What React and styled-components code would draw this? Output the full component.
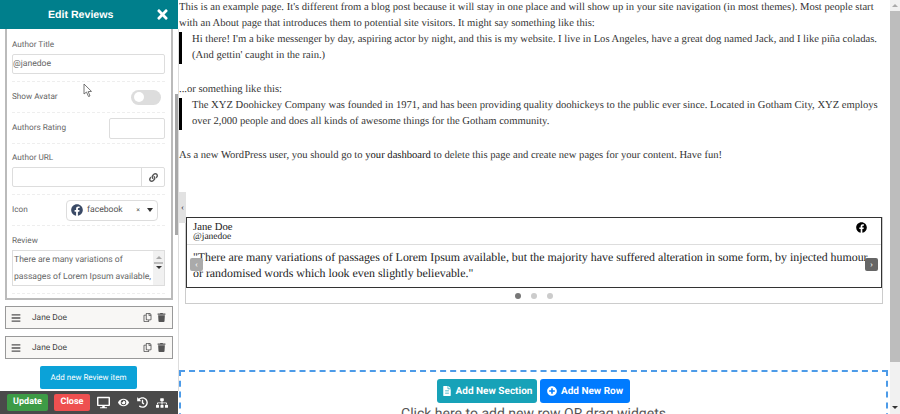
import React from 'react';
import styled, { createGlobalStyle } from 'styled-components';
import { FaFacebook, FaTrash, FaRegCopy, FaFileAlt, FaPlusCircle, FaBars, FaDesktop, FaEye, FaHistory, FaSitemap, FaLink, FaTimes } from 'react-icons/fa';

const GlobalStyle = createGlobalStyle`
  html, body { margin: 0; padding: 0; height: 414px; overflow: hidden; background: #fff; text-rendering: geometricPrecision; }
  * { box-sizing: border-box; }
`;

const Page = styled.div`
  display: flex;
  width: 900px;
  height: 414px;
  overflow: hidden;
`;

const Sidebar = styled.aside`
  flex: 0 0 179px;
  min-width: 0;
  display: flex;
  flex-direction: column;
  height: 414px;
  font-family: Roboto, "Liberation Sans", sans-serif;
  color: #555;
  background: #fff;
`;

const Header = styled.div`
  flex: 0 0 29px;
  margin-right: 1px;
  background: #007f8c;
  color: #fff;
  display: flex;
  align-items: center;
  white-space: nowrap;
  font: bold 10.6px "Liberation Sans", sans-serif;
  padding-left: 48px;
`;

const CloseX = styled.span`
  display: flex;
  margin-left: auto;
  margin-right: 8px;
  font-size: 15px;
`;

const SideBody = styled.div`
  flex: 1;
  min-height: 0;
  position: relative;
  padding-left: 5px;
  border-right: 1px solid #ddd;
`;

const SideThumb = styled.div`
  position: absolute;
  top: 65px;
  right: 0;
  width: 3px;
  height: 141px;
  background: #a8a8a8;
`;

const OpenItem = styled.div`
  width: 168px;
  height: 271px;
  border: 2px solid #bbb;
  border-top: 0;
  padding: 10px 6px 0 5px;
`;

const Field = styled.div`
  display: ${p => (p.$inline ? 'flex' : 'block')};
  align-items: center;
  justify-content: space-between;
  height: ${p => p.$h}px;
  padding-top: ${p => p.$pt || 0}px;
  border-bottom: 1px dashed #eee;
`;

const Label = styled.label`
  display: block;
  font-size: 8.2px;
  line-height: 12px;
  margin-bottom: ${p => (p.$inline ? 0 : 3)}px;
  color: #666;
`;

const Input = styled.div`
  height: ${p => p.$h || 20}px;
  width: ${p => p.$w || 153}px;
  border: 1px solid #ddd;
  border-radius: 2px;
  font-size: 8.6px;
  line-height: 18px;
  color: #666;
`;

const Toggle = styled.div`
  width: 30px;
  height: 15px;
  border-radius: 8px;
  background: #ddd;
  margin-right: 4px;
  padding: 2px 3px;
  &::before {
    content: '';
    display: block;
    width: 10px;
    height: 10px;
    margin-top: 0.5px;
    border-radius: 50%;
    background: #fff;
  }
`;

const UrlRow = styled.div`
  display: flex;
  justify-content: flex-end;
  width: 153px;
  height: 20px;
  border: 1px solid #ddd;
  border-radius: 2px;
`;

const UrlAddon = styled.div`
  width: 23px;
  border-left: 1px solid #ddd;
  display: flex;
  align-items: center;
  justify-content: center;
  color: #555;
  font-size: 9px;
`;

const Select = styled.div`
  width: 92px;
  height: 21px;
  margin-right: 7px;
  border: 1px solid #ddd;
  border-radius: 4px;
  display: flex;
  align-items: center;
  padding: 0 4px 0 4px;
  font-size: 8.6px;
  color: #555;
`;

const SelectName = styled.span`
  margin-left: 4px;
  flex: 1;
`;

const Caret = styled.span`
  margin-left: 7px;
  width: 0;
  height: 0;
  border-left: 3px solid transparent;
  border-right: 3px solid transparent;
  border-top: 4px solid #333;
`;

const Clear = styled.span`
  font-size: 7px;
  color: #333;
`;

const Textarea = styled.div`
  position: relative;
  width: 153px;
  height: 36px;
  border: 1px solid #ddd;
  font-size: 8.6px;
  line-height: 16.5px;
  padding: 1px 0 0 1px;
  color: #666;
  overflow: hidden;
  white-space: pre;
`;

const TextScroll = styled.div`
  position: absolute;
  top: 0;
  right: 0;
  bottom: 0;
  width: 11px;
  background: #f1f1f1;
  display: flex;
  flex-direction: column;
  align-items: center;
  padding-top: 5px;
`;

const TinyUp = styled.span`
  width: 0;
  height: 0;
  border-left: 3px solid transparent;
  border-right: 3px solid transparent;
  border-bottom: 3px solid #aaa;
`;

const TinyBar = styled.span`
  width: 9px;
  height: 2px;
  margin: 3px 0 2px;
  background: #bbb;
`;

const TinyDown = styled.span`
  width: 0;
  height: 0;
  border-left: 3px solid transparent;
  border-right: 3px solid transparent;
  border-top: 3px solid #333;
`;

const Collapsed = styled.div`
  margin-top: ${p => p.$mt}px;
  height: 23px;
  width: 168px;
  border: 1px solid #999;
  background: #f8f7f5;
  display: flex;
  align-items: center;
  padding: 0 6px 0 5px;
  font-size: 8.4px;
  color: #444;
`;

const ItemName = styled.span`
  margin-left: 11px;
  flex: 1;
`;

const ItemIcon = styled.span`
  margin-left: ${p => p.$ml || 0}px;
  display: flex;
  font-size: ${p => p.$s || 9}px;
  color: #555;
`;

const AddItem = styled.div`
  margin: 7px 0 0 35px;
  width: 97px;
  height: 23px;
  background: #0ba2d8;
  border-radius: 2px;
  color: #fff;
  font-size: 8px;
  text-align: center;
  line-height: 23px;
`;

const Footer = styled.div`
  flex: 0 0 23px;
  margin-right: 1px;
  background: #4a4a4a;
  display: flex;
  align-items: center;
  padding-left: 7px;
  color: #fff;
`;

const FootBtn = styled.div`
  height: 17px;
  width: ${p => p.$w}px;
  margin-right: ${p => p.$mr}px;
  border-radius: 2px;
  background: ${p => p.$bg};
  text-align: center;
  font: bold 9px/17px Roboto, "Liberation Sans", sans-serif;
`;

const FootIcon = styled.span`
  display: flex;
  margin-right: 8px;
  font-size: ${p => p.$s || 11}px;
`;

const Main = styled.main`
  flex: 1;
  display: flex;
  min-width: 0;
  height: 414px;
  overflow: hidden;
  font: 10.6px/16px "Liberation Serif", serif;
  color: #333;
`;

const Content = styled.div`
  flex: 1;
  min-width: 0;
  position: relative;
`;

const Para = styled.p`
  margin: 0;
  padding-top: ${p => p.$pt || 0}px;
  white-space: pre;
`;

const Quote = styled.blockquote`
  margin: 0;
  padding-left: 10px;
  border-left: 3px solid #000;
  white-space: pre;
`;

const DashLink = styled.span`
  color: #111;
`;

const Scrollbar = styled.div`
  flex: 0 0 10px;
  background: #f1f1f1;
  display: flex;
  flex-direction: column;
  align-items: center;
  padding-top: 4px;
`;

const ScrollThumb = styled.div`
  align-self: stretch;
  height: 351px;
  margin: 4px 0 44px;
  background: #bdbdbd;
`;

const Tab = styled.div`
  position: absolute;
  left: 0;
  top: 192px;
  width: 7px;
  height: 31px;
  background: #e2e2e2;
  color: #333;
  font-size: 9px;
  line-height: 30px;
  text-align: center;
`;

const Slider = styled.div`
  margin: 53px 7px 0 6px;
  height: 87px;
  border: 1px solid #ccc;
  border-top: 0;
`;

const Review = styled.div`
  position: relative;
  height: 71px;
  border: 1px solid #333;
`;

const ReviewHead = styled.div`
  height: 27px;
  padding: 4px 6px 0;
  border-bottom: 1px solid #ddd;
  display: flex;
  justify-content: space-between;
  font-size: 10.7px;
  line-height: 10px;
  color: #222;
`;

const Handle = styled.div`
  font-size: 9.5px;
  line-height: 10px;
`;

const FbMark = styled.span`
  display: flex;
  margin-right: 8px;
  color: #000;
  font-size: 11px;
`;

const ReviewText = styled.div`
  padding: 4px 6px 0;
  font-size: 11.9px;
  line-height: 16px;
  color: #222;
  white-space: pre;
  overflow: hidden;
`;

const Arrow = styled.div`
  position: absolute;
  top: 40px;
  ${p => (p.$right ? 'right: 3px;' : 'left: 3px;')}
  width: 13px;
  height: 13px;
  background: ${p => (p.$right ? '#666' : '#aaa')};
  border-radius: 2px;
  color: #fff;
  font-size: 9px;
  line-height: 12px;
  text-align: center;
`;

const Dots = styled.div`
  height: 16px;
  display: flex;
  justify-content: center;
  align-items: center;
  gap: 10px;
`;

const Dot = styled.span`
  width: 6px;
  height: 6px;
  border-radius: 50%;
  background: ${p => (p.$on ? '#777' : '#ccc')};
`;

const DropZone = styled.div`
  margin: 66px 2px 0 0;
  border: 2px dashed #4d9be8;
  border-bottom: 0;
  height: 60px;
  text-align: center;
`;

const AddRow = styled.div`
  display: flex;
  justify-content: center;
  gap: 3px;
  padding-top: 7px;
`;

const AddBtn = styled.div`
  display: flex;
  align-items: center;
  justify-content: center;
  gap: 4px;
  height: 24px;
  width: ${p => p.$w}px;
  border-radius: 3px;
  background: ${p => p.$bg};
  color: #fff;
  font: bold 10px Roboto, "Liberation Sans", sans-serif;
`;

const Hint = styled.div`
  font: 14px/16px Roboto, "Liberation Sans", sans-serif;
  margin-top: 3px;
  color: #555;
`;

const Cursor = styled.svg`
  position: absolute;
  left: 83px;
  top: 83px;
`;

const ReviewRow = ({ name, mt }) => (
  <Collapsed $mt={mt}>
    <ItemIcon $s={10}><FaBars /></ItemIcon>
    <ItemName>{name}</ItemName>
    <ItemIcon><FaRegCopy /></ItemIcon>
    <ItemIcon $ml={5}><FaTrash /></ItemIcon>
  </Collapsed>
);

export default function App() {
  return (
    <Page>
      <GlobalStyle />
      <Sidebar>
        <Header>Edit Reviews<CloseX><FaTimes /></CloseX></Header>
        <SideBody>
          <SideThumb />
          <OpenItem>
            <Field $h={43}>
              <Label>Author Title</Label>
              <Input>@janedoe</Input>
            </Field>
            <Field $inline $h={31}>
              <Label $inline>Show Avatar</Label>
              <Toggle />
            </Field>
            <Field $inline $h={31}>
              <Label $inline>Authors Rating</Label>
              <Input $w={56} $h={21} />
            </Field>
            <Field $h={51} $pt={8}>
              <Label>Author URL</Label>
              <UrlRow><UrlAddon><FaLink /></UrlAddon></UrlRow>
            </Field>
            <Field $inline $h={31}>
              <Label $inline>Icon</Label>
              <Select><FaFacebook size={12} color="#3a4a66" /><SelectName>facebook</SelectName><Clear>×</Clear><Caret /></Select>
            </Field>
            <Field $h={68} $pt={9}>
              <Label>Review</Label>
              <Textarea>
                {'There are many variations of\npassages of Lorem Ipsum available,'}
                <TextScroll><TinyUp /><TinyBar /><TinyDown /></TextScroll>
              </Textarea>
            </Field>
          </OpenItem>
          <ReviewRow name="Jane Doe" mt={6} />
          <ReviewRow name="Jane Doe" mt={7} />
          <AddItem>Add new Review item</AddItem>
        </SideBody>
        <Footer>
          <FootBtn $bg="#3d9b46" $w={41} $mr={6}>Update</FootBtn>
          <FootBtn $bg="#ee5050" $w={36} $mr={7}>Close</FootBtn>
          <FootIcon $s={13}><FaDesktop /></FootIcon>
          <FootIcon><FaEye /></FootIcon>
          <FootIcon><FaHistory /></FootIcon>
          <FootIcon $s={12}><FaSitemap /></FootIcon>
        </Footer>
      </Sidebar>
      <Main>
        <Content>
          <Tab>‹</Tab>
          <Para>This is an example page. It's different from a blog post because it will stay in one place and will show up in your site navigation (in most themes). Most people start</Para>
          <Para>with an About page that introduces them to potential site visitors. It might say something like this:</Para>
          <Quote>{"Hi there! I'm a bike messenger by day, aspiring actor by night, and this is my website. I live in Los Angeles, have a great dog named Jack, and I like piña coladas.\n(And gettin' caught in the rain.)"}</Quote>
          <Para $pt={18}>...or something like this:</Para>
          <Quote>{'The XYZ Doohickey Company was founded in 1971, and has been providing quality doohickeys to the public ever since. Located in Gotham City, XYZ employs\nover 2,000 people and does all kinds of awesome things for the Gotham community.'}</Quote>
          <Para $pt={18}>As a new WordPress user, you should go to <DashLink>your dashboard</DashLink> to delete this page and create new pages for your content. Have fun!</Para>
          <Slider>
            <Review>
              <ReviewHead>
                <div>Jane Doe<Handle>@janedoe</Handle></div>
                <FbMark><FaFacebook /></FbMark>
              </ReviewHead>
              <ReviewText>{'"There are many variations of passages of Lorem Ipsum available, but the majority have suffered alteration in some form, by injected humour,\nor randomised words which look even slightly believable."'}</ReviewText>
              <Arrow>‹</Arrow>
              <Arrow $right>›</Arrow>
            </Review>
            <Dots><Dot $on /><Dot /><Dot /></Dots>
          </Slider>
          <DropZone>
            <AddRow>
              <AddBtn $bg="#17a2b8" $w={100}><FaFileAlt />Add New Section</AddBtn>
              <AddBtn $bg="#007bff" $w={90}><FaPlusCircle />Add New Row</AddBtn>
            </AddRow>
            <Hint>Click here to add new row OR drag widgets</Hint>
          </DropZone>
        </Content>
        <Scrollbar>
          <TinyUp />
          <ScrollThumb />
          <TinyDown />
        </Scrollbar>
      </Main>
      <Cursor width="10" height="15" viewBox="0 0 10 15">
        <path d="M1 1 L1 11 L3.5 9 L5.5 13.5 L7 13 L5.2 8.6 L8.5 8.4 Z" fill="#fff" stroke="#666" strokeWidth="0.9" />
      </Cursor>
    </Page>
  );
}
